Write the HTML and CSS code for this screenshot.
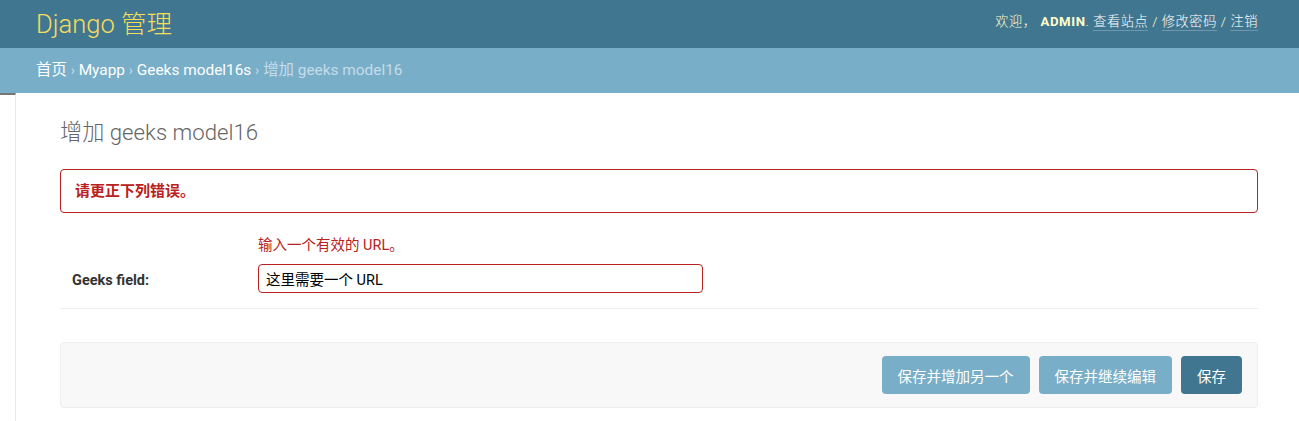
FILE: index.html
```html
<!DOCTYPE html>
<html lang="zh-hans">
<head>
<meta charset="utf-8">
<title>增加 geeks model16 | Django 站点管理员</title>
<link rel="stylesheet" href="styles.css">
</head>
<body>
<div class="header">
  <div class="branding">Django 管理</div>
  <div class="user-tools">欢迎， <strong>admin</strong>. <a href="#">查看站点</a> / <a href="#">修改密码</a> / <a href="#">注销</a></div>
</div>
<div class="breadcrumbs">
  <a href="#">首页</a> <span class="sep">›</span> <a href="#">Myapp</a> <span class="sep">›</span> <a href="#">Geeks model16s</a> <span class="sep">›</span> 增加 geeks model16
</div>
<div class="main">
  <div class="toggle"></div>
  <div class="content">
    <h1 class="title">增加 geeks model16</h1>
    <p class="errornote">请更正下列错误。</p>
    <div class="form-row">
      <ul class="errorlist"><li>输入一个有效的 URL。</li></ul>
      <div class="field">
        <label class="label">Geeks field:</label>
        <input class="input" type="text" value="这里需要一个 URL">
      </div>
    </div>
    <div class="submit-row">
      <button class="btn">保存并增加另一个</button>
      <button class="btn">保存并继续编辑</button>
      <button class="btn btn-default">保存</button>
    </div>
  </div>
</div>
</body>
</html>
```
FILE: styles.css
```css
* { box-sizing: border-box; }
html, body { margin: 0; padding: 0; }
body {
  font-family: Roboto, "Noto Sans CJK SC", "DejaVu Sans", sans-serif;
  color: #333;
  background: #fff;
  font-size: 14px;
}
a { text-decoration: none; }

.header {
  height: 48px;
  background: #417690;
  display: flex;
  align-items: center;
  justify-content: space-between;
  padding: 0 41px 0 36px;
}
.branding {
  font-size: 25.5px;
  font-weight: 300;
  color: #f5dd5d;
  line-height: 30px;
}
.user-tools {
  font-size: 13.2px;
  color: #ffc;
  letter-spacing: 0.6px;
  margin-bottom: 4px;
  font-weight: 300;
  line-height: 18px;
}
.user-tools strong {
  text-transform: uppercase;
  font-weight: 700;
}
.user-tools a {
  color: #fff;
  border-bottom: 1px solid rgba(255,255,255,0.25);
  padding-bottom: 1px;
}

.breadcrumbs {
  height: 45px;
  line-height: 45px;
  background: #79aec8;
  color: #c4dce8;
  font-size: 15.4px;
  padding: 0 36px;
}
.breadcrumbs a { color: #fff; }
.breadcrumbs .sep { font-size: 14px; }

.main { display: flex; }
.toggle {
  flex: 0 0 16px;
  width: 16px;
  min-height: 328px;
  border-right: 1px solid #e8e8e8;
  border-top: 2px solid #767676;
}
.content {
  flex: 1;
  padding: 25px 41px 13px 44px;
}
.title {
  margin: 0 0 23px;
  font-size: 22.2px;
  font-weight: 300;
  color: #666;
  line-height: 28px;
}
.errornote {
  margin: 0 0 10px;
  height: 44px;
  line-height: 42px;
  padding: 0 14px;
  border: 1px solid #ba2121;
  border-radius: 4px;
  color: #ba2121;
  font-weight: 700;
  font-size: 15px;
}
.form-row {
  padding: 13px 10px 15px 12px;
  border-bottom: 1px solid #eee;
}
.errorlist {
  list-style: none;
  margin: 0 0 8px 186px;
  padding: 0;
  color: #ba2121;
  font-size: 14.5px;
  line-height: 20px;
}
.field {
  display: flex;
  align-items: center;
}
.label {
  flex: 0 0 186px;
  font-weight: 700;
  font-size: 14.5px;
  color: #333;
  padding-top: 4px;
}
.input {
  width: 445px;
  height: 29px;
  border: 1px solid #ba2121;
  border-radius: 4px;
  padding: 0 7px;
  font-family: Roboto, "Noto Sans CJK SC", sans-serif;
  font-size: 14.5px;
  color: #000;
}
.submit-row {
  margin-top: 33px;
  height: 66px;
  background: #f8f8f8;
  border: 1px solid #eee;
  border-radius: 4px;
  display: flex;
  justify-content: flex-end;
  align-items: center;
  gap: 9px;
  padding: 0 15px;
}
.btn {
  height: 38px;
  padding: 0 16px;
  border: none;
  border-radius: 4px;
  background: #79aec8;
  color: #fff;
  font-family: Roboto, "Noto Sans CJK SC", sans-serif;
  font-size: 14.5px;
}
.btn-default { background: #417690; }
```
